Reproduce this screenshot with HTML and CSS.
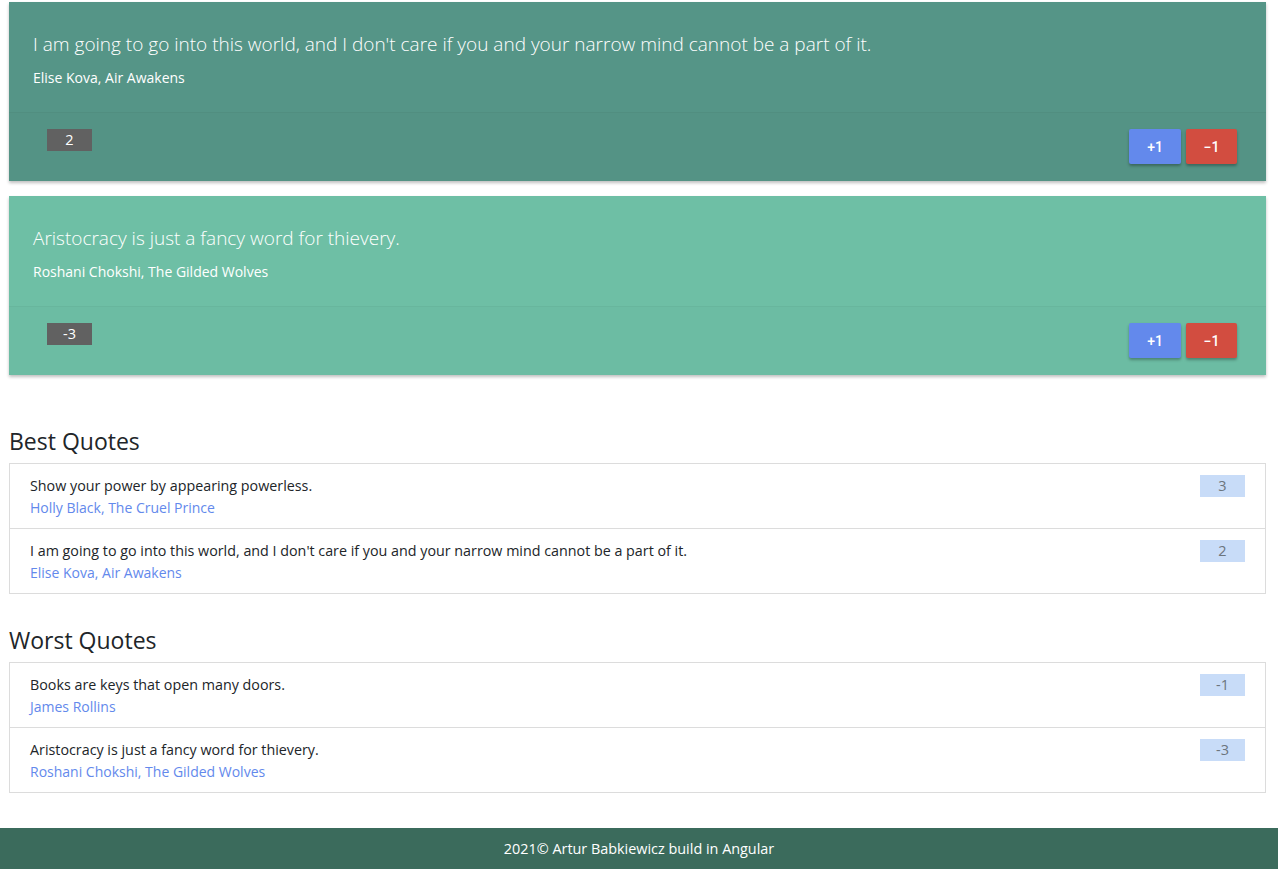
FILE: index.html
```html
<!DOCTYPE html>
<html>
<head>
<meta charset="utf-8">
<link rel="stylesheet" href="styles.css">
</head>
<body>
<main class="page">
  <section class="quote-card card-dark">
    <div class="card-body">
      <p class="quote-text">I am going to go into this world, and I don't care if you and your narrow mind cannot be a part of it.</p>
      <p class="quote-author">Elise Kova, Air Awakens</p>
    </div>
    <div class="card-footer">
      <span class="score">2</span>
      <div class="actions">
        <button class="btn btn-up">+1</button>
        <button class="btn btn-down">−1</button>
      </div>
    </div>
  </section>
  <section class="quote-card card-light">
    <div class="card-body">
      <p class="quote-text">Aristocracy is just a fancy word for thievery.</p>
      <p class="quote-author">Roshani Chokshi, The Gilded Wolves</p>
    </div>
    <div class="card-footer">
      <span class="score">-3</span>
      <div class="actions">
        <button class="btn btn-up">+1</button>
        <button class="btn btn-down">−1</button>
      </div>
    </div>
  </section>

  <h2 class="section-title first">Best Quotes</h2>
  <ul class="list">
    <li class="list-item">
      <div><div class="li-text">Show your power by appearing powerless.</div><div class="li-author">Holly Black, The Cruel Prince</div></div>
      <span class="li-badge">3</span>
    </li>
    <li class="list-item">
      <div><div class="li-text">I am going to go into this world, and I don't care if you and your narrow mind cannot be a part of it.</div><div class="li-author">Elise Kova, Air Awakens</div></div>
      <span class="li-badge">2</span>
    </li>
  </ul>

  <h2 class="section-title">Worst Quotes</h2>
  <ul class="list">
    <li class="list-item">
      <div><div class="li-text">Books are keys that open many doors.</div><div class="li-author">James Rollins</div></div>
      <span class="li-badge">-1</span>
    </li>
    <li class="list-item">
      <div><div class="li-text">Aristocracy is just a fancy word for thievery.</div><div class="li-author">Roshani Chokshi, The Gilded Wolves</div></div>
      <span class="li-badge">-3</span>
    </li>
  </ul>
</main>
<footer class="footer">2021© Artur Babkiewicz build in Angular</footer>
</body>
</html>
```
FILE: styles.css
```css
* { box-sizing: border-box; }
html, body { margin: 0; padding: 0; }
body {
  font-family: "Open Sans", "Noto Sans", sans-serif;
  color: #212529;
  background: #fff;
}
.page {
  padding: 2px 12px 35px 9px;
}
.quote-card {
  color: #fff;
  box-shadow: 0 2px 3px rgba(0,0,0,0.25);
  margin-bottom: 15px;
}
.card-dark { background: #559587; }
.card-light { background: #6ebfa5; }
.card-body {
  height: 110px;
  padding: 28px 24px 0 24px;
}
.quote-text {
  margin: 0;
  font-size: 19px;
  font-weight: 300;
  line-height: 28px;
}
.quote-author {
  margin: 9px 0 0 0;
  font-size: 14px;
  line-height: 22px;
}
.card-footer {
  height: 69px;
  border-top: 1px solid rgba(0,0,0,0.03);
  background: rgba(0,0,0,0.01);
  display: flex;
  justify-content: space-between;
  align-items: flex-start;
  padding: 16px 29px 0 38px;
}
.score {
  display: inline-block;
  width: 45px;
  height: 22px;
  line-height: 22px;
  text-align: center;
  background: #616161;
  color: #fff;
  font-size: 14.5px;
}
.actions { display: flex; gap: 5px; }
.btn {
  border: 0;
  width: 52px;
  height: 35px;
  border-radius: 2px;
  color: #fff;
  font-family: Roboto, sans-serif;
  font-weight: 500;
  font-size: 14px;
  box-shadow: 0 2px 3px rgba(0,0,0,0.3);
}
.btn-up { background: #6389ec; width: 52px; }
.btn-down { background: #d24d40; width: 51px; }
.section-title {
  margin: 0 0 6px 0;
  font-size: 23px;
  font-weight: 400;
  line-height: 32px;
  color: #212529;
}
.section-title.first { margin-top: 50px; }
.list + .section-title { margin-top: 30px; }
.list {
  list-style: none;
  margin: 0;
  padding: 0;
  border: 1px solid #dcdcdc;
}
.list-item {
  height: 65px;
  padding: 11px 20px 0 20px;
  display: flex;
  justify-content: space-between;
  align-items: flex-start;
  border-top: 1px solid #dcdcdc;
}
.list-item:first-child { border-top: 0; height: 64px; }
.li-text {
  font-size: 14.3px;
  line-height: 22px;
  color: #212529;
}
.li-author {
  font-size: 14px;
  line-height: 21px;
  color: #6389ec;
}
.li-badge {
  display: inline-block;
  width: 45px;
  height: 22px;
  line-height: 22px;
  text-align: center;
  background: #c8dcf8;
  color: #6c757d;
  font-size: 14.5px;
}
.footer {
  background: #3b6b5c;
  color: #fff;
  text-align: center;
  height: 41px;
  line-height: 41px;
  font-size: 14.4px;
}
```
